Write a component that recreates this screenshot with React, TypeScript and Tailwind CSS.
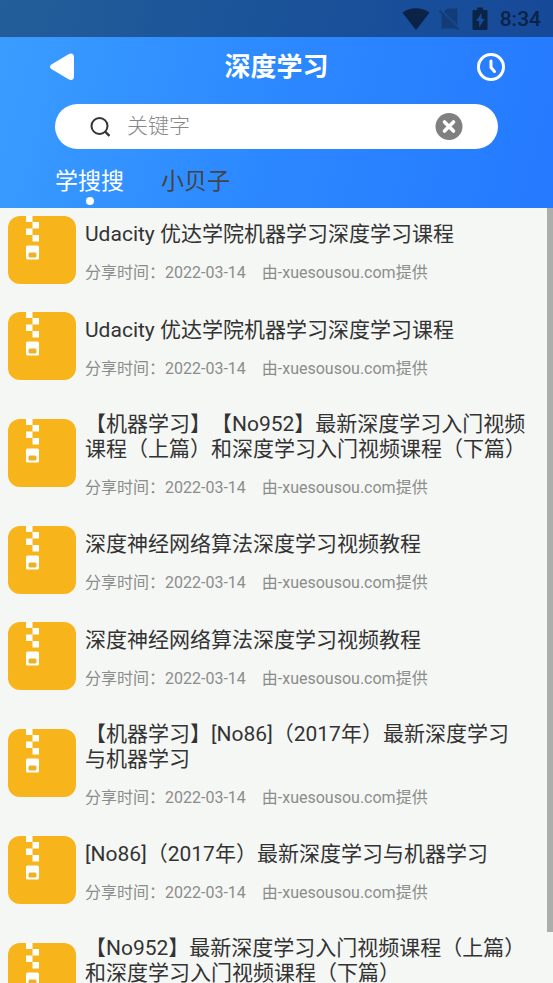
import { useState } from "react";

type Resource = {
  id: number;
  title: string;
  date: string;
  source: string;
};

const resources: Resource[] = [
  { id: 1, title: "Udacity 优达学院机器学习深度学习课程", date: "2022-03-14", source: "xuesousou.com" },
  { id: 2, title: "Udacity 优达学院机器学习深度学习课程", date: "2022-03-14", source: "xuesousou.com" },
  {
    id: 3,
    title: "【机器学习】【No952】最新深度学习入门视频课程（上篇）和深度学习入门视频课程（下篇）",
    date: "2022-03-14",
    source: "xuesousou.com",
  },
  { id: 4, title: "深度神经网络算法深度学习视频教程", date: "2022-03-14", source: "xuesousou.com" },
  { id: 5, title: "深度神经网络算法深度学习视频教程", date: "2022-03-14", source: "xuesousou.com" },
  {
    id: 6,
    title: "【机器学习】[No86]（2017年）最新深度学习与机器学习",
    date: "2022-03-14",
    source: "xuesousou.com",
  },
  { id: 7, title: "[No86]（2017年）最新深度学习与机器学习", date: "2022-03-14", source: "xuesousou.com" },
  {
    id: 8,
    title: "【No952】最新深度学习入门视频课程（上篇）和深度学习入门视频课程（下篇）",
    date: "2022-03-14",
    source: "xuesousou.com",
  },
];

const tabs = ["学搜搜", "小贝子"];

function StatusBar() {
  return (
    <div className="flex h-[37px] items-center justify-end bg-black/40 pr-3 text-[#0b2346]">
      <svg width="28" height="24" viewBox="0 0 28 24" className="mr-2" fill="currentColor">
        <path d="M14 23L.5 5.700C4 2.700 8.800 1.200 14 1.200s10 1.500 13.500 4.500z" />
      </svg>
      <svg width="22" height="24" viewBox="0 0 22 24" className="mr-3 opacity-40">
        <path d="M9.500 1.500H19.500V18.500L6 4.700zM3.500 6.500L18.500 21.500H3.500z" fill="currentColor" />
        <path d="M1.500 3.500L20.500 22.500" stroke="currentColor" strokeWidth="1.800" />
      </svg>
      <svg width="16" height="24" viewBox="0 0 16 24" className="mr-3" fill="currentColor">
        <path
          fillRule="evenodd"
          d="M5 .5h6V3h3.300c.7 0 1.200.5 1.200 1.200v17.600c0 .7-.5 1.200-1.200 1.200H1.700C1 23 .5 22.500.5 21.800V4.200C.5 3.500 1 3 1.700 3H5zM9.500 6L4 14h3.200v6.500L12.500 12H9.500z"
        />
      </svg>
      <span className="text-[21px] font-medium leading-6">8:34</span>
    </div>
  );
}

function ZipIcon() {
  return (
    <svg width="68" height="68" viewBox="0 0 68 68" className="shrink-0">
      <rect width="68" height="68" rx="12" fill="#f8b41b" />
      <g fill="#fff">
        <rect x="18" y="0" width="6.500" height="6" />
        <rect x="24.500" y="6" width="6.500" height="6.500" />
        <rect x="18" y="12.500" width="6.500" height="6.500" />
        <rect x="24.500" y="19" width="6.500" height="6.500" />
        <rect x="18" y="29.500" width="13" height="14" rx="1.500" />
      </g>
      <rect x="20.500" y="36.500" width="8" height="5" rx="1.500" fill="#eeb02a" />
    </svg>
  );
}

function ResourceRow({ resource }: { resource: Resource }) {
  return (
    <li>
      <a href="#" className="flex items-center gap-[9px] pb-7 pl-2 pr-[26px]">
        <ZipIcon />
        <div className="min-w-0 flex-1 pt-1">
          <h2 className="text-[21px] leading-[25px] text-[#333]">{resource.title}</h2>
          <p className="mt-[15px] flex gap-4 text-[16px] leading-[21px] text-[#8b8d8b]">
            <span>分享时间：{resource.date}</span>
            <span>由-{resource.source}提供</span>
          </p>
        </div>
      </a>
    </li>
  );
}

export default function App() {
  const [keyword, setKeyword] = useState("");
  const [activeTab, setActiveTab] = useState(tabs[0]);

  return (
    <div
      lang="zh-CN"
      className="flex h-screen flex-col overflow-hidden bg-[#f5f7f5] font-[Roboto,'Noto_Sans_CJK_SC',sans-serif] [text-spacing-trim:space-all]"
    >
      <header className="shrink-0 bg-linear-105 from-[#3b9dff] via-[#2c88ff] to-[#2579ff]">
        <StatusBar />

        {/* Title */}
        <div className="flex h-[60px] items-center justify-between px-12">
          <button type="button" aria-label="返回">
            <svg width="28" height="28" viewBox="0 0 28 28" fill="#fff">
              <path d="M3.800 11.200L20.500 1.300C23.400-.3 26 .8 26 4v19.500c0 3.300-2.600 4.300-5.500 2.700L3.800 16.300c-2.400-1.500-2.400-3.600 0-5.100z" />
            </svg>
          </button>
          <h1 className="text-[26px] font-bold leading-8 text-white">深度学习</h1>
          <button type="button" aria-label="历史记录">
            <svg width="28" height="28" viewBox="0 0 28 28" fill="none" stroke="#fff" strokeWidth="3">
              <circle cx="14" cy="14" r="12.500" />
              <path d="M14 8V14.500L17.500 18.500" strokeLinecap="round" strokeLinejoin="round" />
            </svg>
          </button>
        </div>

        {/* Search */}
        <div className="mx-[55px] mt-[7px] flex h-[45px] items-center rounded-full bg-white px-[35px]">
          <svg width="20" height="20" viewBox="0 0 20 20" className="shrink-0" fill="none" stroke="#333" strokeWidth="2">
            <circle cx="9.500" cy="9" r="8" />
            <path d="M15 14.500L19.500 19" strokeWidth="2.400" />
          </svg>
          <input
            type="text"
            aria-label="关键字"
            placeholder="关键字"
            value={keyword}
            onChange={(e) => setKeyword(e.target.value)}
            className="ml-[17px] min-w-0 flex-1 bg-transparent text-[21px] font-light text-[#333] outline-none placeholder:text-[#888]"
          />
          <button type="button" aria-label="清除" onClick={() => setKeyword("")}>
            <svg width="28" height="28" viewBox="0 0 28 28">
              <circle cx="14" cy="13.500" r="13.500" fill="#808080" />
              <path d="M9.500 9l9 9M18.500 9l-9 9" stroke="#fff" strokeWidth="3.600" strokeLinecap="round" />
            </svg>
          </button>
        </div>

        {/* Tabs */}
        <nav className="flex gap-[37px] px-[55px] pb-[3px] pt-[17px]">
          {tabs.map((tab) => (
            <button
              key={tab}
              type="button"
              onClick={() => setActiveTab(tab)}
              className={`flex flex-col items-center text-[23px] leading-[31px] ${
                tab === activeTab ? "text-white" : "text-[#444]"
              }`}
            >
              {tab}
              <span className={`size-2 rounded-full ${tab === activeTab ? "bg-white" : ""}`} />
            </button>
          ))}
        </nav>
      </header>

      <main className="relative min-h-0 flex-1 overflow-hidden">
        <ul className="pt-2">
          {resources.map((resource) => (
            <ResourceRow key={resource.id} resource={resource} />
          ))}
        </ul>
        {/* Scroll indicator */}
        <div className="absolute bottom-[51px] right-0 top-0 w-[6px] bg-[#acaeac]" />
      </main>
    </div>
  );
}
